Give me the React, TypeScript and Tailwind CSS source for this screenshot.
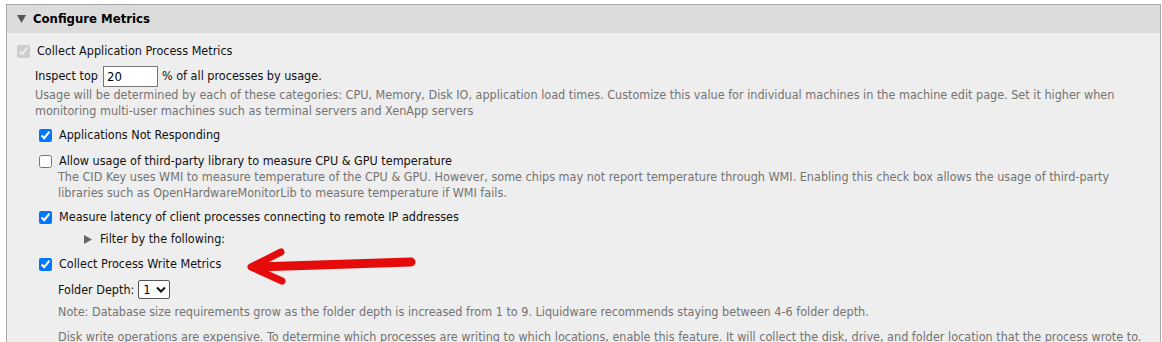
import React from "react";

const font = { fontFamily: "'DejaVu Sans Condensed', 'Liberation Sans', sans-serif" };

function Check({ checked, disabled }: { checked?: boolean; disabled?: boolean }) {
  return (
    <input
      type="checkbox"
      defaultChecked={checked}
      disabled={disabled}
      className="w-[13px] h-[13px] m-0 shrink-0 accent-[#0075ff]"
    />
  );
}

export default function App() {
  return (
    <div className="relative w-[1162px] h-[342px] overflow-hidden bg-white text-[12.5px] text-[#111]" style={font}>
      <div className="pt-[4px] pl-[6px]">
        <div className="w-[1155px] h-[400px] border border-[#aaaaaa] bg-[#eeeeee]">
          {/* header */}
          <div className="h-[28px] bg-[#dcdcdc] flex items-center pl-[10px]">
            <svg width="9" height="8" viewBox="0 0 9 8" className="mr-[7px]">
              <polygon points="0,0 9,0 4.5,8" fill="#555" />
            </svg>
            <span className="font-bold text-[13px] text-[#000]">Configure Metrics</span>
          </div>
          {/* body */}
          <div className="pt-[10px] leading-[16px]">
            <div className="flex items-center pl-[10px] gap-[7px] h-[16px]">
              <Check checked disabled />
              <span>Collect Application Process Metrics</span>
            </div>

            <div className="pl-[28px] mt-[6px]">
              <div className="flex items-center h-[22px]">
                <span>Inspect top</span>
                <input
                  type="text"
                  defaultValue="20"
                  className="ml-[5px] w-[55px] h-[21px] border border-[#767676] bg-white pl-[3px] text-[13px] text-[#000] outline-none"
                />
                <span className="ml-[4px]">% of all processes by usage.</span>
              </div>
              <div className="text-[#737373] pr-[14px]">
                Usage will be determined by each of these categories: CPU, Memory, Disk IO, application load times. Customize this value for individual machines in the machine edit page. Set it higher when monitoring multi-user machines such as terminal servers and XenApp servers
              </div>
            </div>

            <div className="pl-[32px] mt-[8px]">
              <div className="flex items-center gap-[7px] h-[16px]">
                <Check checked />
                <span>Applications Not Responding</span>
              </div>

              <div className="mt-[10px]">
                <div className="flex items-center gap-[7px] h-[16px]">
                  <Check />
                  <span>Allow usage of third-party library to measure CPU &amp; GPU temperature</span>
                </div>
                <div className="pl-[19px] pr-[14px] text-[#737373]">
                  The CID Key uses WMI to measure temperature of the CPU &amp; GPU. However, some chips may not report temperature through WMI. Enabling this check box allows the usage of third-party libraries such as OpenHardwareMonitorLib to measure temperature if WMI fails.
                </div>
              </div>

              <div className="mt-[8px] flex items-center gap-[7px] h-[16px]">
                <Check checked />
                <span>Measure latency of client processes connecting to remote IP addresses</span>
              </div>

              <div className="mt-[6px] flex items-center h-[16px] pl-[45px]">
                <svg width="8" height="9" viewBox="0 0 8 9" className="mr-[8px]">
                  <polygon points="0,0 8,4.5 0,9" fill="#666" />
                </svg>
                <span>Filter by the following:</span>
              </div>

              <div className="mt-[9px] flex items-center gap-[7px] h-[16px]">
                <Check checked />
                <span>Collect Process Write Metrics</span>
              </div>

              <div className="pl-[19px]">
                <div className="mt-[8px] flex items-center h-[19px]">
                  <span>Folder Depth:</span>
                  <div className="ml-[4px] w-[32px] h-[19px] border border-[#555] rounded-[2px] bg-white flex items-center pl-[4px] text-[13px] text-[#000]">
                    <span className="leading-none">1</span>
                    <svg width="10" height="7" viewBox="0 0 10 7" className="ml-[5px]">
                      <polyline points="1,1.5 5,5.5 9,1.5" fill="none" stroke="#111" strokeWidth="2" />
                    </svg>
                  </div>
                </div>
                <div className="mt-[5px] text-[#737373]">
                  Note: Database size requirements grow as the folder depth is increased from 1 to 9. Liquidware recommends staying between 4-6 folder depth.
                </div>
                <div className="mt-[9px] text-[#737373] whitespace-nowrap">
                  Disk write operations are expensive. To determine which processes are writing to which locations, enable this feature. It will collect the disk, drive, and folder location that the process wrote to.
                </div>
              </div>
            </div>
          </div>
        </div>
      </div>

      <svg
        className="absolute left-0 top-0 pointer-events-none"
        width="1162"
        height="342"
        viewBox="0 0 1162 342"
      >
        <g stroke="#e50b0b" strokeLinecap="round" strokeLinejoin="round" fill="none">
          <line x1="411" y1="262" x2="256" y2="267" strokeWidth="9" />
          <polyline points="281,252 251,267 282,281" strokeWidth="7" />
        </g>
      </svg>
    </div>
  );
}
